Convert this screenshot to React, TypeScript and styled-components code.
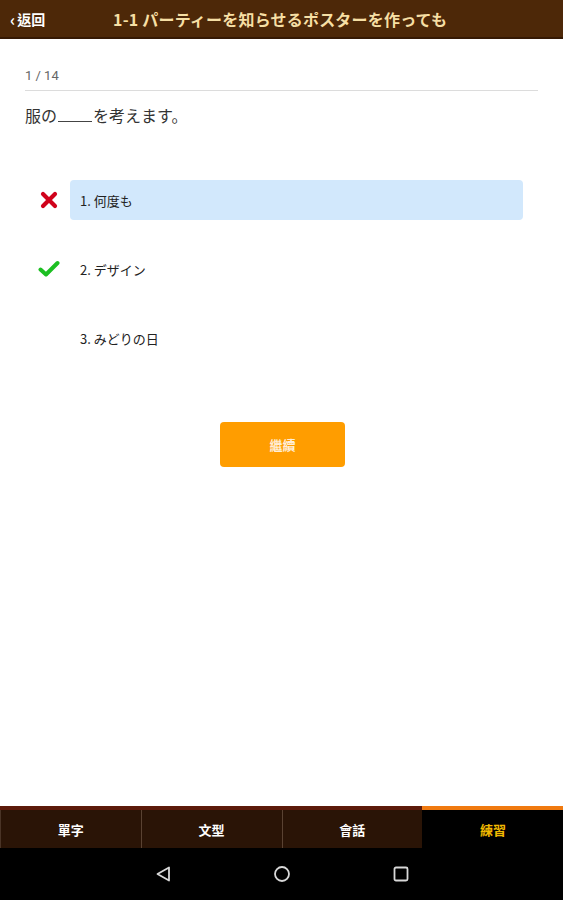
import React from 'react'
import styled, { createGlobalStyle } from 'styled-components'

const data = {
  back: '返回',
  title: '1-1 パーティーを知らせるポスターを作っても',
  progress: '1 / 14',
  before: '服の',
  after: 'を考えます。',
  options: [
    { label: '1. 何度も', mark: 'wrong', picked: true },
    { label: '2. デザイン', mark: 'right', picked: false },
    { label: '3. みどりの日', mark: '', picked: false }
  ],
  next: '繼續',
  tabs: ['單字', '文型', '會話', '練習'],
  active: 3
}

export default () => (
  <>
    <Global />
    <Screen>
      <Header>
        <Back>
          <span>‹</span>
          {data.back}
        </Back>
        <Title>{data.title}</Title>
      </Header>
      <Body>
        <Progress>{data.progress}</Progress>
        <Question>
          {data.before}
          <Blank />
          {data.after}
        </Question>
        <Options>
          {data.options.map(o => (
            <Option key={o.label}>
              <Mark>
                {o.mark === 'wrong' && (
                  <svg width="18" height="18" viewBox="0 0 18 18">
                    <path d="M3 3 L15 15 M15 3 L3 15" stroke="#d0021b" strokeWidth="4.2" strokeLinecap="round" />
                  </svg>
                )}
                {o.mark === 'right' && (
                  <svg width="22" height="18" viewBox="0 0 22 18">
                    <path d="M2.5 9.5 L8 14.5 L19.5 3" stroke="#1cbf22" strokeWidth="4" fill="none" strokeLinecap="round" strokeLinejoin="round" />
                  </svg>
                )}
              </Mark>
              <Answer picked={o.picked}>{o.label}</Answer>
            </Option>
          ))}
        </Options>
        <NextRow>
          <NextButton>{data.next}</NextButton>
        </NextRow>
      </Body>
      <Tabs>
        {data.tabs.map((t, i) => (
          <Tab key={t} active={i === data.active}>
            {t}
          </Tab>
        ))}
      </Tabs>
      <NavBar>
        <svg width="18" height="18" viewBox="0 0 18 18">
          <path d="M15 2.5 L15 15.5 L3.5 9 Z" stroke="#d8d8d8" strokeWidth="1.8" fill="none" strokeLinejoin="round" />
        </svg>
        <svg width="18" height="18" viewBox="0 0 18 18">
          <circle cx="9" cy="9" r="7" stroke="#d8d8d8" strokeWidth="1.8" fill="none" />
        </svg>
        <svg width="18" height="18" viewBox="0 0 18 18">
          <rect x="2.5" y="2.5" width="13" height="13" rx="1.5" stroke="#d8d8d8" strokeWidth="1.8" fill="none" />
        </svg>
      </NavBar>
    </Screen>
  </>
)

const Global = createGlobalStyle`
  body {
    margin: 0;
    font-family: 'Noto Sans CJK JP', 'Noto Sans', sans-serif;
  }
`

const Screen = styled.div`
  width: 563px;
  height: 900px;
  display: flex;
  flex-direction: column;
  background: #fff;
  overflow: hidden;
`

const Header = styled.div`
  height: 37px;
  flex-shrink: 0;
  background: #4d2808;
  border-bottom: 2px solid #351904;
  display: flex;
  align-items: center;
  padding-left: 10px;
`

const Back = styled.div`
  color: #fff;
  font-family: 'Noto Sans CJK TC', sans-serif;
  font-weight: 700;
  font-size: 14px;
  width: 103px;
  display: flex;
  align-items: center;

  span {
    font-size: 16px;
    margin-right: 2px;
    line-height: 1;
  }
`

const Title = styled.div`
  color: #f6dfa4;
  font-weight: 700;
  font-size: 16px;
  white-space: nowrap;
  letter-spacing: 0.2px;
`

const Body = styled.div`
  flex: 1;
  padding: 29px 25px 0;
  display: flex;
  flex-direction: column;
`

const Progress = styled.div`
  color: #666;
  font-family: 'Roboto', sans-serif;
  font-size: 13px;
  padding-bottom: 7px;
  border-bottom: 1px solid #dcdcdc;
`

const Question = styled.div`
  margin-top: 12px;
  font-size: 16px;
  color: #333;
  display: flex;
  align-items: baseline;
`

const Blank = styled.span`
  display: inline-block;
  width: 34px;
  border-bottom: 1px solid #444;
  margin: 0 1px;
`

const Options = styled.div`
  margin-top: 53px;
  display: flex;
  flex-direction: column;
  gap: 29px;
`

const Option = styled.div`
  display: flex;
  align-items: center;
  height: 40px;
`

const Mark = styled.div`
  width: 45px;
  flex-shrink: 0;
  box-sizing: border-box;
  display: flex;
  justify-content: center;
  padding-left: 2px;
`

const Answer = styled.div<{ picked: boolean }>`
  width: 453px;
  height: 40px;
  box-sizing: border-box;
  padding-left: 10px;
  display: flex;
  align-items: center;
  font-size: 13px;
  color: #222;
  border-radius: 4px;
  background: ${p => (p.picked ? '#d2e8fc' : 'transparent')};
`

const NextRow = styled.div`
  margin-top: 64px;
  display: flex;
  justify-content: center;
  padding-left: 2px;
`

const NextButton = styled.button`
  width: 125px;
  height: 45px;
  border: none;
  border-radius: 4px;
  background: #ff9d00;
  color: #ffeed8;
  font-family: 'Noto Sans CJK TC', sans-serif;
  font-weight: 700;
  font-size: 13px;
`

const Tabs = styled.div`
  height: 38px;
  flex-shrink: 0;
  display: grid;
  grid-template-columns: repeat(4, 1fr);
  border-top: 4px solid #5c1a0a;
  background: #2a1406;
`

const Tab = styled.div<{ active: boolean }>`
  display: flex;
  align-items: center;
  justify-content: center;
  font-family: 'Noto Sans CJK TC', sans-serif;
  font-weight: 700;
  font-size: 13px;
  color: ${p => (p.active ? '#f0b800' : '#fff')};
  background: ${p => (p.active ? '#000' : '#2a1406')};
  border-left: 1px solid ${p => (p.active ? '#000' : '#5a4232')};
  box-shadow: ${p => (p.active ? '0 -4px 0 #f07a10' : 'none')};

  &:first-child {
    border-left-color: #4a3426;
  }
`

const NavBar = styled.div`
  height: 52px;
  flex-shrink: 0;
  background: #000;
  display: flex;
  align-items: center;
  justify-content: center;
  gap: 101px;
`
